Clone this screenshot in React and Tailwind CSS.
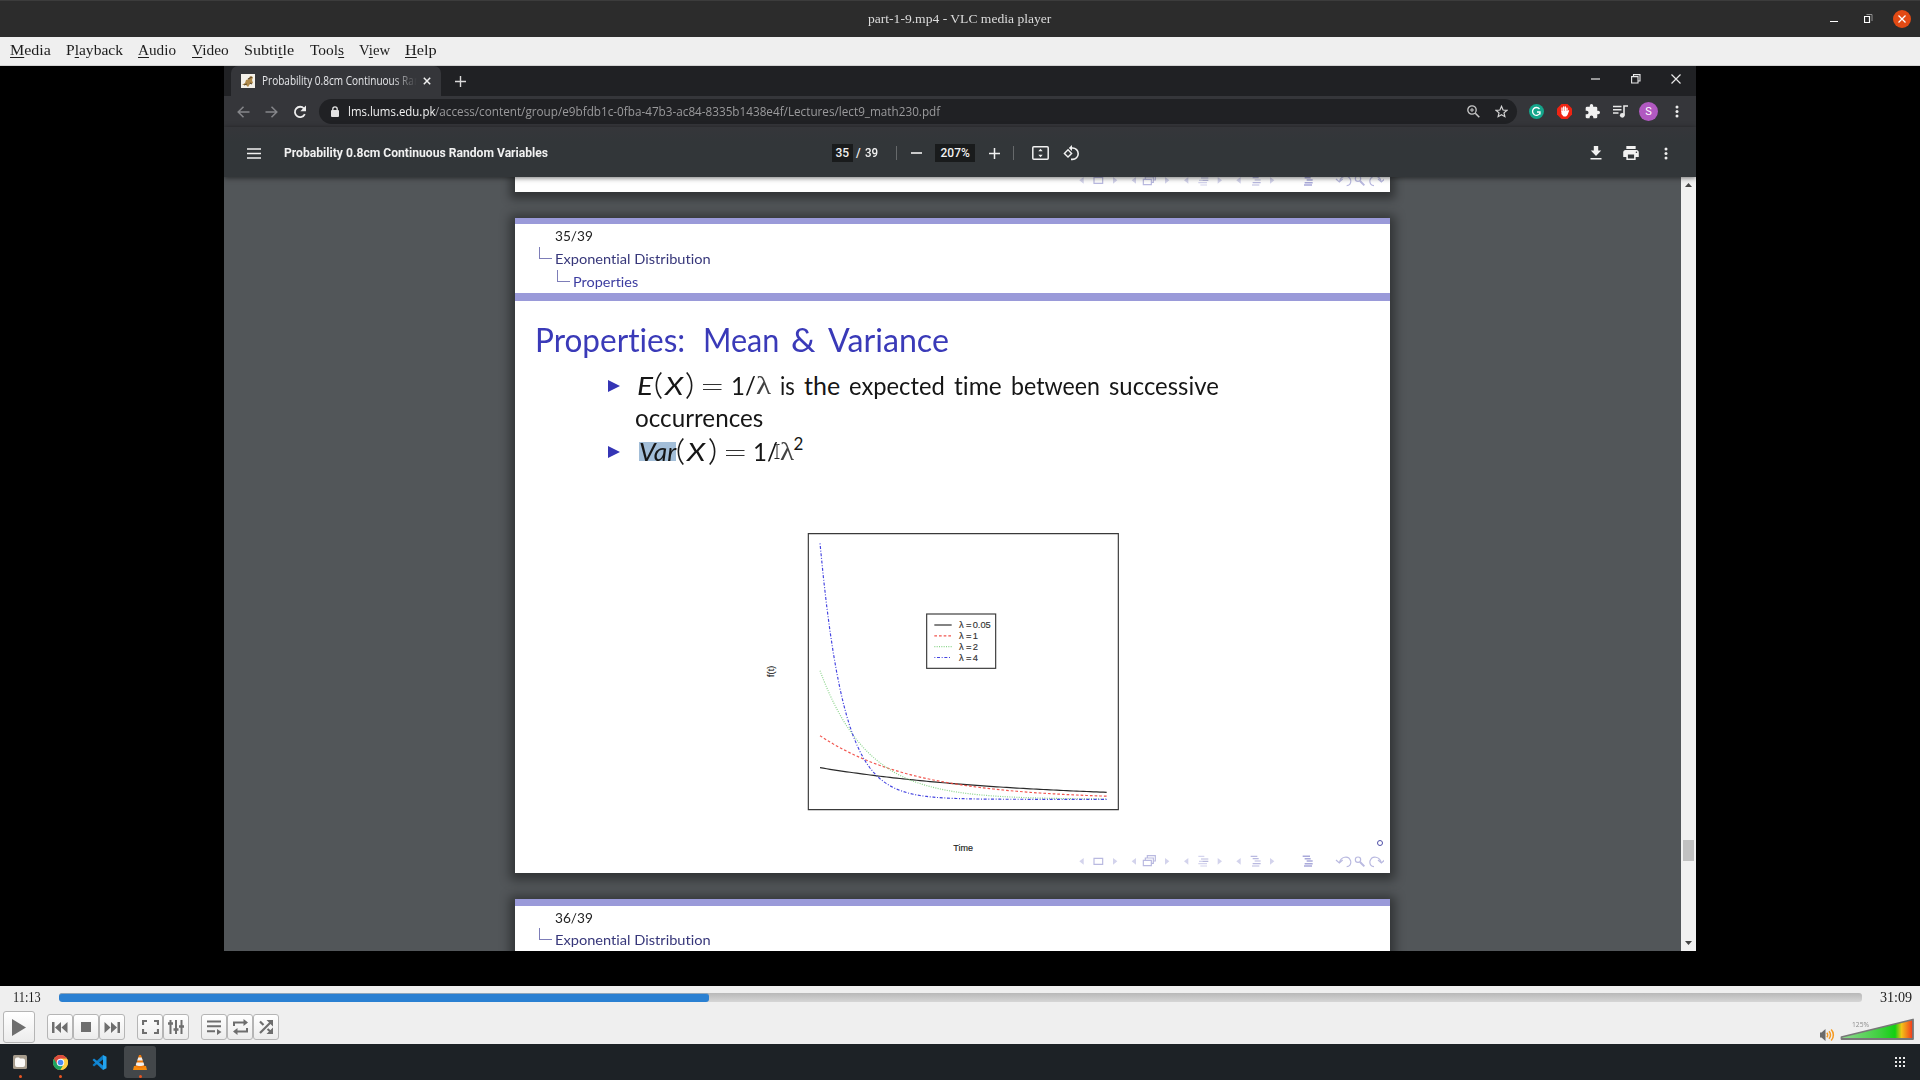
import React, { useLayoutEffect, useRef, useState } from "react";

const SERIF = "font-['Liberation_Serif',serif]";
const LATO = "font-['Lato',sans-serif] [font-variant-ligatures:none]";

/* Text squeezed or stretched to a fixed advance width. */
function Fit({ w, className = "", children }) {
  const ref = useRef(null);
  const [s, setS] = useState(1);
  useLayoutEffect(() => {
    const n = ref.current.offsetWidth;
    if (n) setS(w / n);
  }, [w]);
  return (
    <span className={`block shrink-0 whitespace-nowrap ${className}`} style={{ width: w }}>
      <span ref={ref} className="inline-block origin-left whitespace-pre" style={{ transform: `scaleX(${s})` }}>
        {children}
      </span>
    </span>
  );
}

function Ico({ w, h, vb, className = "", children }) {
  return (
    <svg width={w} height={h} viewBox={vb || `0 0 ${w} ${h}`} className={`block shrink-0 ${className}`} fill="none">
      {children}
    </svg>
  );
}

function TitleBar() {
  return (
    <header className="flex h-[37px] items-center border-t border-[#3c3c3c] bg-[#2c2c2c]">
      <Fit w={183} className={`ml-[868px] text-[13.5px] leading-[34px] text-[#dcdcdc] ${SERIF}`}>part-1-9.mp4 - VLC media player</Fit>
      <Ico w={8} h={2} className="ml-[779px] mt-[5px]"><path d="M0 .5h8" stroke="#fff" /></Ico>
      <Ico w={9} h={9} className="ml-[26px] -mt-px">
        <path d="M.5 2.5h5v6h-5z" stroke="#fff" strokeWidth="1.200" /><path d="M2.5.5h5.500v6.500" stroke="#8f8f8f" />
      </Ico>
      <span className="-mt-px ml-[20px] flex size-[18px] items-center justify-center rounded-full bg-[#e24a14]">
        <Ico w={8} h={8}><path d="M.5.5l7 7M7.500.5l-7 7" stroke="#fff" strokeWidth="1.300" /></Ico>
      </span>
    </header>
  );
}

const MENU = [
  ["", "M", "edia", 40.5, 10], ["P", "l", "ayback", 57, 15.5], ["", "A", "udio", 38.5, 15], ["", "V", "ideo", 37, 15],
  ["Subti", "t", "le", 50.5, 15], ["Tool", "s", "", 34, 15.5], ["V", "i", "ew", 31.5, 15], ["", "H", "elp", 31.5, 14.5],
];

function MenuBar() {
  return (
    <nav className={`flex h-[29px] border-b border-[#d4d4d4] bg-[#efefef] text-[15px] leading-[26px] text-[#1c1c1c] ${SERIF}`}>
      {MENU.map(([a, u, b, w, ml]) => (
        <div key={a + u + b} style={{ marginLeft: ml }}>
          <Fit w={w}>{a}<span className="underline decoration-1 underline-offset-2">{u}</span>{b}</Fit>
        </div>
      ))}
    </nav>
  );
}

function TabStrip() {
  return (
    <div className="flex h-[30px] bg-[#202124]">
      <div className="ml-[7px] flex h-[30px] w-[210px] items-center rounded-t-[7px] bg-[#35363a]">
        <Ico w={14} h={14} className="ml-[10px]">
          <rect width="14" height="14" fill="#f4f1ea" />
          <path d="M1 11l3-2 1-3 3-1 1-3 3 1-1 3 1 3-3 1-2 3-2-2z" fill="#b08a4a" />
          <path d="M7 5l4-2M3 11l3-1M9 9l2 1" stroke="#5d4a2a" strokeWidth="1.200" />
        </Ico>
        <Fit w={158} className="ml-[7px] font-['Open_Sans',sans-serif] text-[12px] leading-[30px] text-[#e6e7ea] [mask-image:linear-gradient(to_right,black_130px,transparent_155px)]">Probability 0.8cm Continuous Ran</Fit>
        <Ico w={8} h={8} className="ml-[3px]"><path d="M.8.8l6.400 6.400M7.200.8L.8 7.200" stroke="#f0f0f0" strokeWidth="1.500" /></Ico>
      </div>
      <Ico w={11} h={11} className="ml-[14px] mt-[9.500px]"><path d="M5.500 0v11M0 5.500h11" stroke="#dadada" strokeWidth="1.400" /></Ico>
      <Ico w={9} h={2} className="ml-[1125px] mt-[12px]"><path d="M0 1h9" stroke="#e8e8e8" strokeWidth="1.200" /></Ico>
      <Ico w={10} h={10} className="ml-[31px] mt-[7.500px]">
        <path d="M.6 2.600h6.400v6.400H.6zM2.500 2.500V.6h6.500v6.400H7" stroke="#e8e8e8" strokeWidth="1.100" />
      </Ico>
      <Ico w={10} h={10} className="ml-[30px] mt-[7.500px]"><path d="M.5.5l9 9M9.500.5l-9 9" stroke="#e8e8e8" strokeWidth="1.200" /></Ico>
    </div>
  );
}

function AddressRow() {
  return (
    <div className="flex h-[31px] items-center bg-[#35363a]">
      <Ico w={13} h={12} className="ml-[13px]"><path d="M12.500 6H1.200M6.500.8L1.200 6l5.300 5.200" stroke="#85868a" strokeWidth="1.500" /></Ico>
      <Ico w={13} h={12} className="ml-[15px]"><path d="M.5 6h11.300M6.500.8L11.800 6l-5.300 5.200" stroke="#85868a" strokeWidth="1.500" /></Ico>
      <Ico w={14} h={14} className="ml-[15px]">
        <path d="M11.800 9.200A5.200 5.200 0 1 1 11 3.500" stroke="#eee" strokeWidth="1.800" /><path d="M13 .5v5.700H7.300z" fill="#eee" />
      </Ico>
      <div className="ml-[12px] flex h-[25px] w-[1198px] items-center rounded-full bg-[#202124] font-['Open_Sans',sans-serif] text-[12.5px] leading-[25px]">
        <Ico w={8} h={11} className="ml-[12px]">
          <rect y="4" width="8" height="7" rx="1" fill="#e3e3e3" /><path d="M1.800 4.500V3a2.200 2.200 0 0 1 4.400 0v1.500" stroke="#e3e3e3" strokeWidth="1.300" />
        </Ico>
        <Fit w={87} className="ml-[9px] text-[#f1f1f1]">lms.lums.edu.pk</Fit>
        <Fit w={505.5} className="text-[#9a9a9c]">/access/content/group/e9bfdb1c-0fba-47b3-ac84-8335b1438e4f/Lectures/lect9_math230.pdf</Fit>
        <Ico w={13} h={13} className="ml-[526px]">
          <circle cx="5" cy="5" r="4.200" stroke="#c8c8c8" strokeWidth="1.300" /><path d="M8.300 8.300L12.300 12.300" stroke="#c8c8c8" strokeWidth="1.600" /><path d="M3 5h4M5 3v4" stroke="#c8c8c8" />
        </Ico>
        <Ico w={13} h={13} vb="0 0 24 24" className="ml-[15px]">
          <path d="M12 2.500l2.900 6.700 7.100.6-5.400 4.700 1.600 7-6.200-3.700-6.200 3.700 1.600-7L2 9.800l7.100-.6z" stroke="#d4d4d4" strokeWidth="2.200" />
        </Ico>
      </div>
      <Ico w={15} h={15} className="ml-[12px]">
        <circle cx="7.500" cy="7.500" r="7.500" fill="#15a58b" /><path d="M10.500 5A3.900 3.900 0 1 0 11 9M8 8h3v2.500" stroke="#fff" strokeWidth="1.300" />
      </Ico>
      <Ico w={15} h={15} className="ml-[13px]">
        <path d="M4.500 0h6L15 4.500v6L10.500 15h-6L0 10.500v-6z" fill="#ee2413" />
        <path d="M5 7.500V4M6.700 7V2.800M8.400 7V3M10 7.500V4.200" stroke="#fff" strokeWidth="1.300" strokeLinecap="round" />
        <path d="M4.400 7h6.300l1-1 .5.600-1.700 4.400-1.500 1.500H6.600L4.400 10z" fill="#fff" />
      </Ico>
      <Ico w={15} h={15} vb="1 1 22 22" className="ml-[13px]">
        <path fill="#f1f1f1" d="M20.500 11H19V7a2 2 0 0 0-2-2h-4V3.500a2.500 2.500 0 0 0-5 0V5H4a2 2 0 0 0-2 2v3.800h1.500a2.700 2.700 0 0 1 0 5.400H2V20a2 2 0 0 0 2 2h3.800v-1.500a2.700 2.700 0 0 1 5.400 0V22H17a2 2 0 0 0 2-2v-4h1.500a2.500 2.500 0 0 0 0-5z" />
      </Ico>
      <Ico w={15} h={13} className="ml-[13px]">
        <path d="M0 1.500h8.500M0 4.700h8.500M0 8h5.500" stroke="#e9e9e9" strokeWidth="1.500" /><path d="M11 10V1h4" stroke="#e9e9e9" strokeWidth="1.600" /><circle cx="9.300" cy="10.300" r="2.400" fill="#e9e9e9" />
      </Ico>
      <span className="ml-[11px] flex size-[19px] items-center justify-center rounded-full bg-[#b159c1] font-['Roboto',sans-serif] text-[11px] leading-none text-white">S</span>
      <Dots className="ml-[17px]" />
    </div>
  );
}

function Dots({ className }) {
  return (
    <Ico w={4} h={13} className={className}>
      <circle cx="2" cy="2" r="1.500" fill="#eee" /><circle cx="2" cy="6.500" r="1.500" fill="#eee" /><circle cx="2" cy="11" r="1.500" fill="#eee" />
    </Ico>
  );
}

function PdfToolbar() {
  return (
    <div className="relative z-10 flex h-[50px] items-center bg-gradient-to-b from-[#35363a] via-[#323639] via-30% to-[#323639] pt-[2px] font-['Roboto',sans-serif] text-[12px] font-medium leading-[18px] text-[#f1f1f1] shadow-[0_1px_5px_rgba(0,0,0,0.55)]">
      <Ico w={14} h={11} className="ml-[23px]"><path d="M0 1h14M0 5.500h14M0 10h14" stroke="#f1f1f1" strokeWidth="1.600" /></Ico>
      <Fit w={264} className="ml-[22.500px] font-bold">Probability 0.8cm Continuous Random Variables</Fit>
      <div className="ml-[284.500px] flex h-[18px] w-[21px] justify-center bg-[#191b1c]"><Fit w={14}>35</Fit></div>
      <Fit w={5} className="ml-[3px]">/</Fit>
      <Fit w={13.500} className="ml-[4px]">39</Fit>
      <span className="ml-[17.500px] h-[14px] w-px bg-[#66696b]" />
      <Ico w={11} h={2} className="ml-[14px]"><path d="M0 1h11" stroke="#f1f1f1" strokeWidth="1.600" /></Ico>
      <div className="ml-[13px] flex h-[18px] w-[40px] justify-center bg-[#191b1c]"><Fit w={29}>207%</Fit></div>
      <Ico w={11} h={11} className="ml-[13.500px]"><path d="M5.500 0v11M0 5.500h11" stroke="#f1f1f1" strokeWidth="1.500" /></Ico>
      <span className="ml-[13px] h-[14px] w-px bg-[#66696b]" />
      <Ico w={17} h={14} className="ml-[18px]">
        <rect x=".8" y=".8" width="15.400" height="12.400" rx="1" stroke="#f1f1f1" strokeWidth="1.500" />
        <path d="M8.500 2.800l2.200 2.500H6.300zM8.500 11.200l2.200-2.500H6.300z" fill="#f1f1f1" />
      </Ico>
      <Ico w={17} h={16} className="ml-[14.500px]">
        <path d="M5 4.800l3.600 3.600L5 12 1.400 8.400z" stroke="#f1f1f1" strokeWidth="1.400" />
        <path d="M8 3h1.500a5.700 5.700 0 0 1 0 11.400H8" stroke="#f1f1f1" strokeWidth="1.600" /><path d="M9 0v6L5.800 3z" fill="#f1f1f1" />
      </Ico>
      <Ico w={12} h={14} className="ml-[510px]"><path d="M3.800 0h4.400v4.500h3L6 10 .8 4.500h3zM.5 12h11v1.600H.5z" fill="#f1f1f1" /></Ico>
      <Ico w={16} h={14} vb="2 3 20 18" className="ml-[20.500px]">
        <path fill="#f1f1f1" d="M19 8H5c-1.700 0-3 1.300-3 3v6h4v4h12v-4h4v-6c0-1.700-1.300-3-3-3zm-3 11H8v-5h8v5zm3-7a1 1 0 1 1 0-2 1 1 0 0 1 0 2zM18 3H6v4h12V3z" />
      </Ico>
      <Dots className="ml-[25px]" />
    </div>
  );
}

/* Beamer navigation row; three units per pixel. */
function NavSymbols() {
  const lt = (x) => <path key={x} d={`M${x} 31l13-10v20z`} />;
  const rt = (x) => <path key={x} d={`M${x} 21l13 10-13 10z`} />;
  return (
    <svg width="310" height="22" viewBox="0 0 930 66" className="absolute bottom-[0.5px] right-[6px]" fill="none">
      <g fill="#d3d3ec">{[16, 173, 330, 487].map(lt)}{[117, 273, 431, 588].map(rt)}</g>
      <g stroke="#b9b9e0" strokeWidth="3.500">
        <path d="M60 22h26v18H60zM208 28h24v16h-24zM214 27v-6h24v16h-6M220 20v-6h24v16h-6" />
        <path d="M373 16h18M373 38h26M379 45h20M375 31h10" stroke="#d4d4ee" /><path d="M381 24h22M385 31h18" stroke="#b9b9dd" />
        <path d="M530 16h20M536 23h18M542 30h18M536 38h24M534 45h22" />
        <path d="M686 16h22M692 23h18M698 30h18M692 38h24M690 45h24" strokeWidth="4.500" stroke="#a9a9da" />
        <path d="M796 36c4-20 28-24 34-6 2 10-4 17-12 17M786 27l10 9 10-9M922 36c-4-20-28-24-34-6-2 10 4 17 12 17M912 27l10 9 10-9" strokeWidth="3.500" />
        <circle cx="852" cy="26" r="8" /><path d="M858 33l13 13" strokeWidth="6" />
      </g>
    </svg>
  );
}

function Branch({ className = "" }) {
  return <span className={`block h-[12px] w-[13px] shrink-0 border-b border-l border-[#7d7db8] ${className}`} />;
}

function PageHead({ n }) {
  return (
    <div className={`${LATO} text-[14px]`}>
      <div className="h-[6.500px] bg-[#9a9ad9]" />
      <Fit w={38} className="ml-[40px] h-[22.500px] leading-[23px] text-[#222]">{n}/39</Fit>
      <div className="flex h-[23.500px] leading-[23px] text-[#37377a]">
        <Branch className="ml-[24px]" />
        <Fit w={155.500} className="ml-[2.500px]">Exponential Distribution</Fit>
      </div>
    </div>
  );
}

const curve = (amp, k) => {
  const pts = [];
  for (let x = 240; x <= 1100; x += 10) pts.push(`${x},${(838 - amp * Math.exp(-k * (x - 240))).toFixed(1)}`);
  return pts.join(" ");
};

const SERIES = [
  { c: "#2a2a2a", d: "", amp: 95, k: 0.00175, t: "0.05", o: 1 },
  { c: "#f0443c", d: "8 6", amp: 191, k: 0.0035, t: "1", o: 0.9 },
  { c: "#7ccf7c", d: "3 4", amp: 386, k: 0.007, t: "2", o: 0.9 },
  { c: "#4444e0", d: "3 5 9 5", amp: 768, k: 0.014, t: "4", o: 1 },
];

/* Exponential densities; three units per pixel. */
function Chart() {
  return (
    <svg width="400" height="345" viewBox="0 0 1200 1035" className="block" fill="none" fontFamily="'Liberation Sans', sans-serif">
      <path d="M205 41H1135V869H205z" stroke="#3a3a3a" strokeWidth="3.500" />
      {SERIES.map((s) => (
        <g key={s.t} stroke={s.c} strokeOpacity={s.o} strokeWidth="3.500" strokeDasharray={s.d}>
          <polyline points={curve(s.amp, s.k)} />
        </g>
      ))}
      <rect x="560" y="282" width="207" height="163" fill="#fff" stroke="#3a3a3a" strokeWidth="3.500" />
      {SERIES.map((s, i) => (
        <g key={s.t}>
          <path d={`M583 ${315 + i * 32.500}h52`} stroke={s.c} strokeOpacity={s.o} strokeWidth="3.500" strokeDasharray={s.d} />
          <g fontSize="28" fill="#333" stroke="#333" strokeWidth=".4">
            <text x="657" y={325 + i * 32.500}>λ</text>
            <text x="678" y={325 + i * 32.500}>=</text>
            <text x="698" y={325 + i * 32.500}>{s.t}</text>
          </g>
        </g>
      ))}
      <text x="640" y="993" fontSize="27" fill="#222" stroke="#222" strokeWidth=".5" textLength="59">Time</text>
      <text transform="translate(102 471) rotate(-90)" fontSize="27" fill="#222" stroke="#222" strokeWidth=".5" textLength="34">f(t)</text>
    </svg>
  );
}

const Bullet = () => <Ico w={12} h={12} className="ml-[93px] mt-[11px]"><path d="M0 0l12 6-12 6z" fill="#3535b5" /></Ico>;
const Equals = () => <Ico w={19} h={8} className="ml-[10px] mt-[14px]"><path d="M0 1.500h18.500M0 6.500h18.500" stroke="#333" strokeWidth="1.200" /></Ico>;
const Paren = ({ flip, className = "" }) => (
  <Ico w={7} h={27} className={`mt-[3px] ${flip ? "-scale-x-100" : ""} ${className}`}>
    <path d="M6.300.5C-.3 8-.3 19 6.300 26.500" stroke="#1c1c1c" strokeWidth="1.600" />
  </Ico>
);

function Slide() {
  return (
    <section className="relative ml-[291px] mt-[25.500px] h-[655.500px] w-[874.500px] bg-white shadow-[0_2px_10px_5px_rgba(0,0,0,0.4)]">
      <PageHead n={35} />
      <div className={`flex h-[23px] text-[14px] leading-[23px] text-[#3c3ca0] ${LATO}`}>
        <Branch className="ml-[42px]" />
        <Fit w={65} className="ml-[2.500px]">Properties</Fit>
      </div>
      <div className="h-[7.500px] bg-[#9a9ad9]" />
      <h1 className={`mt-[18px] flex h-[40px] text-[33px] leading-[40px] text-[#3a3ab8] ${LATO}`}>
        <Fit w={150} className="ml-[20px]">Properties:</Fit>
        <Fit w={76} className="ml-[18px]">Mean</Fit>
        <Fit w={25} className="ml-[12px]">&amp;</Fit>
        <Fit w={121} className="ml-[12px]">Variance</Fit>
      </h1>
      <div className={`mt-[10px] text-[25px] leading-[33px] text-[#161616] ${LATO}`}>
        <div className="flex h-[32px]">
          <Bullet />
          <Fit w={15.500} className="ml-[17px] italic">E</Fit>
          <Paren className="ml-[2px]" />
          <Fit w={18} className="ml-[3px] italic">X</Fit>
          <Paren flip className="ml-[3.500px]" />
          <Equals />
          <Fit w={25} className="ml-[8.500px]">1/</Fit>
          <Fit w={15} className="font-['Liberation_Serif',serif] text-[#444]">λ</Fit>
          <Fit w={15} className="ml-[9.500px]">is</Fit>
          <Fit w={36} className="ml-[9px]">the</Fit>
          <Fit w={96} className="ml-[8.500px]">expected</Fit>
          <Fit w={48} className="ml-[9.500px]">time</Fit>
          <Fit w={89} className="ml-[9px]">between</Fit>
          <Fit w={110} className="ml-[8.500px]">successive</Fit>
        </div>
        <Fit w={128} className="ml-[119.500px] h-[34px] leading-[33px]">occurrences</Fit>
        <div className="flex h-[33px]">
          <Bullet />
          <div className="ml-[18.500px] mt-[7px] h-[19px] bg-[#a3bed8]"><Fit w={37} className="-mt-[7px] italic">Var</Fit></div>
          <Paren className="ml-[1px]" />
          <Fit w={18} className="ml-[3.500px] italic">X</Fit>
          <Paren flip className="ml-[3.500px]" />
          <Equals />
          <Fit w={25} className="ml-[8.500px]">1/</Fit>
          <Ico w={6} h={15} className="-ml-[4.5px] mt-[9px]"><path d="M.5.5h2l.5.500.5-.500h2M3 1v13M.5 14.500h5" stroke="#111" strokeWidth=".9" /></Ico>
          <Fit w={14} className="font-['Liberation_Serif',serif] text-[#444]">λ</Fit>
          <Fit w={10} className="-mt-[8px] text-[17px]">2</Fit>
        </div>
      </div>
      <div className="ml-[225px] mt-[52.500px]"><Chart /></div>
      <span className="absolute bottom-[27px] right-[7px] size-[6px] rounded-full border-[1.500px] border-[#5050a8]" />
      <NavSymbols />
    </section>
  );
}

function Viewer() {
  return (
    <div className="relative flex h-[774px] bg-[#525659]">
      <div className="h-full w-[1457px] overflow-hidden">
        <div className="relative ml-[291px] h-[15px] w-[874.500px] bg-white shadow-[0_2px_10px_5px_rgba(0,0,0,0.4)]"><NavSymbols /></div>
        <Slide />
        <section className="ml-[291px] mt-[26px] h-[300px] w-[874.500px] bg-white shadow-[0_2px_10px_5px_rgba(0,0,0,0.4)]"><PageHead n={36} /></section>
      </div>
      <div className="flex w-[15px] flex-col items-center bg-[#f1f1f1]">
        <Ico w={7} h={4} className="mt-[6px]"><path d="M0 4L3.500 0 7 4z" fill="#444" /></Ico>
        <span className="mt-[653px] h-[21px] w-[11px] bg-[#c1c1c1]" />
        <Ico w={7} h={4} className="mb-[6px] mt-auto"><path d="M0 0l3.500 4L7 0z" fill="#444" /></Ico>
      </div>
    </div>
  );
}

function Btn({ className = "", children, big }) {
  return (
    <button className={`flex shrink-0 items-center justify-center rounded-[3px] border border-[#b5b5b5] bg-gradient-to-b from-white to-[#ececec] ${big ? "size-[32px]" : "size-[26px]"} ${className}`}>
      {children}
    </button>
  );
}

function Controls() {
  const g = "#6e6e6e";
  return (
    <div className="h-[58px] bg-[#efefef]">
      <div className={`flex h-[24px] text-[15px] leading-[23px] text-[#1c1c1c] ${SERIF}`}>
        <Fit w={28} className="ml-[13px]">11:13</Fit>
        <div className="ml-[18px] mt-[7px] h-[9px] w-[1803px] overflow-hidden rounded-[3px] bg-gradient-to-b from-[#b8b8b8] to-[#d6d6d6]">
          <div className="h-full w-[650px] rounded-[3px] border-t border-[#8fa5ba] bg-[#2a80d2]" />
        </div>
        <Fit w={32} className="ml-[18px]">31:09</Fit>
      </div>
      <div className="flex h-[34px] items-center">
        <Btn big className="ml-[3px]"><Ico w={14} h={17}><path d="M0 0l14 8.500L0 17z" fill={g} /></Ico></Btn>
        <Btn className="ml-[12px]"><Ico w={16} h={11}><path d="M0 0h2.500v11H0zM9 0v11L3 5.500zM15.500 0v11l-6-5.500z" fill={g} /></Ico></Btn>
        <Btn><Ico w={10} h={10}><path d="M0 0h10v10H0z" fill={g} /></Ico></Btn>
        <Btn><Ico w={16} h={11}><path d="M13.500 0H16v11h-2.500zM.5 0v11l6-5.500zM7 0v11l6-5.500z" fill={g} /></Ico></Btn>
        <Btn className="ml-[12px]"><Ico w={17} h={14}><path d="M5 1H1v4M12 1h4v4M5 13H1V9M12 13h4V9" stroke={g} strokeWidth="2.200" /></Ico></Btn>
        <Btn><Ico w={16} h={14}><path d="M2.500 0v14M8 0v14M13.500 0v14" stroke={g} strokeWidth="2" /><path d="M0 3.500h5M5.500 9.500h5M11 6.500h5" stroke={g} strokeWidth="2.500" /></Ico></Btn>
        <Btn className="ml-[12px]"><Ico w={15} h={15}><path d="M0 1.500h14M0 6.300h14M0 11.200h8" stroke={g} strokeWidth="2" /><path d="M10 9l4.500 3L10 15z" fill={g} /></Ico></Btn>
        <Btn><Ico w={15} h={16}><path d="M1 7V3.500h10M14 9v3.500H4" stroke={g} strokeWidth="2" /><path d="M10.500 0L15 3.500 10.500 7zM4.500 9L0 12.500 4.500 16z" fill={g} /></Ico></Btn>
        <Btn><Ico w={14} h={14}><path d="M1 13L12 2M1 1.500l3.500 3.500M8.500 9l3.500 3" stroke={g} strokeWidth="2.200" /><path d="M7.500 0H14v6.500zM14 7.500V14H7.500z" fill={g} /></Ico></Btn>
        <Ico w={15} h={12} className="ml-[1541px] mt-[15px]">
          <path d="M0 3.500h1.500L5.500 0v12L1.500 8.500H0z" fill="#6b6b6b" /><path d="M6.800 3.800c1.200 1.200 1.200 3.200 0 4.400M9 2.200c2 2.100 2 5.500 0 7.600M11.200.6c2.900 3.100 2.900 7.700 0 10.800" stroke="#f59a23" strokeWidth="1.500" />
        </Ico>
        <div className="relative ml-[5px] mt-[6px] h-[24px] w-[75px]">
          <svg width="75" height="24" viewBox="0 0 75 24" className="block">
            <defs><linearGradient id="vol"><stop offset="0" stopColor="#8fd68f" /><stop offset=".55" stopColor="#3cd03c" /><stop offset=".75" stopColor="#12d012" /><stop offset=".84" stopColor="#f3c417" /><stop offset="1" stopColor="#f4331d" /></linearGradient></defs>
            <path d="M1.500 21v-2L73 1.500V21z" fill="url(#vol)" stroke="#777" strokeWidth="1.800" strokeLinejoin="round" />
          </svg>
          <Fit w={17} className="absolute left-[11.5px] top-[2px] font-['Open_Sans',sans-serif] text-[7.500px] leading-[9px] text-[#8c8c8c]">125%</Fit>
        </div>
      </div>
    </div>
  );
}

function Dock() {
  const cell = "relative flex size-[32px] items-center justify-center rounded-[3px]";
  const dot = <span className="absolute bottom-0 left-[14.500px] size-[3px] rounded-full bg-[#e95420]" />;
  return (
    <footer className="flex h-[36px] items-center gap-2 bg-[#1d2226] pl-[4px]">
      <div className={cell}><Ico w={14} h={14}><rect width="14" height="14" rx="1.500" fill="#a69c8c" /><path d="M2 4.500a2 2 0 0 1 2-2h2l1 1h3a2 2 0 0 1 2 2V10a2 2 0 0 1-2 2H4a2 2 0 0 1-2-2z" fill="#fbfaf8" /></Ico>{dot}</div>
      <div className={cell}>
        <Ico w={15} h={15} vb="0 0 48 48">
          <circle cx="24" cy="24" r="24" fill="#ffcd40" /><path d="M24 24L3.200 12A24 24 0 0 0 24 48l10.400-18z" fill="#1da462" /><path d="M3.200 12a24 24 0 0 1 41.600 0H24l-10.400 18z" fill="#dd4b3e" />
          <path d="M24 48a24 24 0 0 0 20.800-36H24l10.400 18z" fill="#ffcd40" /><circle cx="24" cy="24" r="12" fill="#fff" /><circle cx="24" cy="24" r="9" fill="#4a8af4" />
        </Ico>{dot}
      </div>
      <div className={cell}>
        <Ico w={15} h={15} vb="0 0 30 30" className="-ml-px">
          <path d="M22 0l7 3.500v23L22 30z" fill="#23a3ee" /><path d="M22 0v9L4 23l-3-3z" fill="#0a7bc4" /><path d="M22 30v-9L4 7l-3 3z" fill="#1489d6" />
        </Ico>
      </div>
      <div className={`${cell} bg-[#43474a]`}>
        <Ico w={14} h={15} vb="0 0 28 30">
          <path d="M2 22h24l2 8H0z" fill="#f58a0c" /><path d="M12 0h4l7 23c-4 4-14 4-18 0z" fill="#f37a0a" /><path d="M10.500 5h7l2 6h-11zM7 15h14l1.500 5c-4 2.500-13 2.500-17 0z" fill="#eee" />
        </Ico>{dot}
      </div>
      <div className="ml-auto mr-[15px] grid grid-cols-3 gap-[2px]">
        {Array.from({ length: 9 }, (_, i) => <span key={i} className="size-[2px] bg-[#e8e8e8]" />)}
      </div>
    </footer>
  );
}

export default function App() {
  return (
    <div className="h-[1080px] w-[1920px] overflow-hidden bg-black">
      <TitleBar />
      <MenuBar />
      <main className="flex h-[920px] justify-center bg-black">
        <div className="h-[885px] w-[1472px] overflow-hidden">
          <TabStrip />
          <AddressRow />
          <PdfToolbar />
          <Viewer />
        </div>
      </main>
      <Controls />
      <Dock />
    </div>
  );
}
